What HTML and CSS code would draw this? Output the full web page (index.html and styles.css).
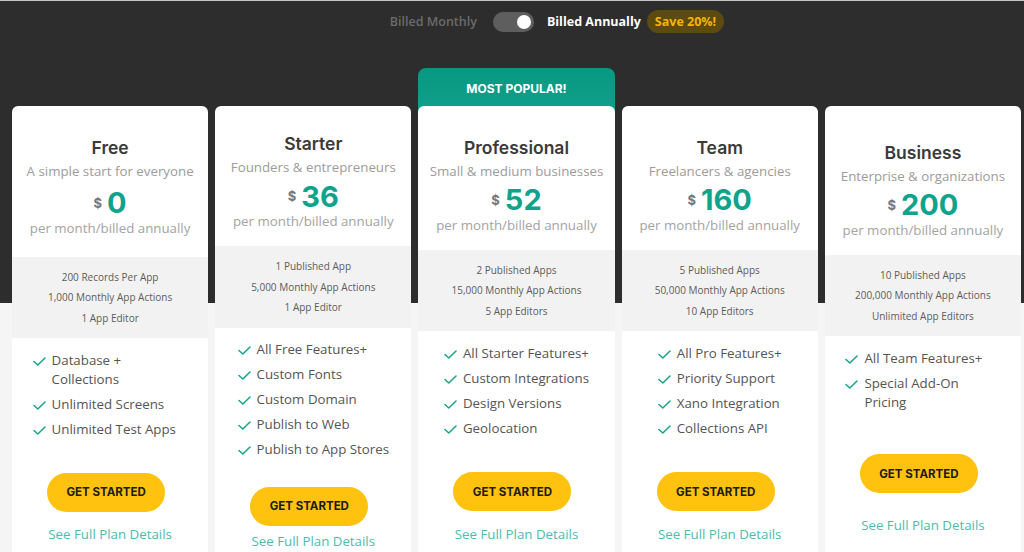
FILE: index.html
```html
<!DOCTYPE html>
<html lang="en">
<head>
  <meta charset="UTF-8">
  <meta name="viewport" content="width=device-width, initial-scale=1.0">
  <title>Pricing</title>
  <link rel="stylesheet" href="styles.css">
</head>
<body>
  <div class="billing">
    <span class="billing-label">Billed Monthly</span>
    <span class="switch"><span class="switch-knob"></span></span>
    <span class="billing-label active">Billed Annually</span>
    <span class="save-badge">Save 20%!</span>
  </div>

  <div class="plans">
    <!-- Free -->
    <div class="plan plan-free">
      <div class="plan-head">
        <h3 class="plan-title">Free</h3>
        <div class="plan-sub">A simple start for everyone</div>
        <div class="plan-price"><span class="currency">$</span><span class="amount">0</span></div>
        <div class="plan-period">per month/billed annually</div>
      </div>
      <div class="limits">
        <div>200 Records Per App</div>
        <div>1,000 Monthly App Actions</div>
        <div>1 App Editor</div>
      </div>
      <div class="features">
        <ul>
          <li><svg viewBox="0 0 13 9"><path d="M1 4.5 4.8 8 12 1"/></svg><span>Database + Collections</span></li>
          <li><svg viewBox="0 0 13 9"><path d="M1 4.5 4.8 8 12 1"/></svg><span>Unlimited Screens</span></li>
          <li><svg viewBox="0 0 13 9"><path d="M1 4.5 4.8 8 12 1"/></svg><span>Unlimited Test Apps</span></li>
        </ul>
      </div>
      <div class="cta">
        <a class="btn" href="#">GET STARTED</a>
        <a class="plan-link" href="#">See Full Plan Details</a>
      </div>
    </div>

    <!-- Starter -->
    <div class="plan">
      <div class="plan-head">
        <h3 class="plan-title">Starter</h3>
        <div class="plan-sub">Founders &amp; entrepreneurs</div>
        <div class="plan-price"><span class="currency">$</span><span class="amount">36</span></div>
        <div class="plan-period">per month/billed annually</div>
      </div>
      <div class="limits">
        <div>1 Published App</div>
        <div>5,000 Monthly App Actions</div>
        <div>1 App Editor</div>
      </div>
      <div class="features">
        <ul>
          <li><svg viewBox="0 0 13 9"><path d="M1 4.5 4.8 8 12 1"/></svg><span>All Free Features+</span></li>
          <li><svg viewBox="0 0 13 9"><path d="M1 4.5 4.8 8 12 1"/></svg><span>Custom Fonts</span></li>
          <li><svg viewBox="0 0 13 9"><path d="M1 4.5 4.8 8 12 1"/></svg><span>Custom Domain</span></li>
          <li><svg viewBox="0 0 13 9"><path d="M1 4.5 4.8 8 12 1"/></svg><span>Publish to Web</span></li>
          <li><svg viewBox="0 0 13 9"><path d="M1 4.5 4.8 8 12 1"/></svg><span>Publish to App Stores</span></li>
        </ul>
      </div>
      <div class="cta">
        <a class="btn" href="#">GET STARTED</a>
        <a class="plan-link" href="#">See Full Plan Details</a>
      </div>
    </div>

    <!-- Professional -->
    <div class="plan">
      <div class="plan-badge">MOST POPULAR!</div>
      <div class="plan-head">
        <h3 class="plan-title">Professional</h3>
        <div class="plan-sub">Small &amp; medium businesses</div>
        <div class="plan-price"><span class="currency">$</span><span class="amount">52</span></div>
        <div class="plan-period">per month/billed annually</div>
      </div>
      <div class="limits">
        <div>2 Published Apps</div>
        <div>15,000 Monthly App Actions</div>
        <div>5 App Editors</div>
      </div>
      <div class="features">
        <ul>
          <li><svg viewBox="0 0 13 9"><path d="M1 4.5 4.8 8 12 1"/></svg><span>All Starter Features+</span></li>
          <li><svg viewBox="0 0 13 9"><path d="M1 4.5 4.8 8 12 1"/></svg><span>Custom Integrations</span></li>
          <li><svg viewBox="0 0 13 9"><path d="M1 4.5 4.8 8 12 1"/></svg><span>Design Versions</span></li>
          <li><svg viewBox="0 0 13 9"><path d="M1 4.5 4.8 8 12 1"/></svg><span>Geolocation</span></li>
        </ul>
      </div>
      <div class="cta">
        <a class="btn" href="#">GET STARTED</a>
        <a class="plan-link" href="#">See Full Plan Details</a>
      </div>
    </div>

    <!-- Team -->
    <div class="plan">
      <div class="plan-head">
        <h3 class="plan-title">Team</h3>
        <div class="plan-sub">Freelancers &amp; agencies</div>
        <div class="plan-price"><span class="currency">$</span><span class="amount">160</span></div>
        <div class="plan-period">per month/billed annually</div>
      </div>
      <div class="limits">
        <div>5 Published Apps</div>
        <div>50,000 Monthly App Actions</div>
        <div>10 App Editors</div>
      </div>
      <div class="features">
        <ul>
          <li><svg viewBox="0 0 13 9"><path d="M1 4.5 4.8 8 12 1"/></svg><span>All Pro Features+</span></li>
          <li><svg viewBox="0 0 13 9"><path d="M1 4.5 4.8 8 12 1"/></svg><span>Priority Support</span></li>
          <li><svg viewBox="0 0 13 9"><path d="M1 4.5 4.8 8 12 1"/></svg><span>Xano Integration</span></li>
          <li><svg viewBox="0 0 13 9"><path d="M1 4.5 4.8 8 12 1"/></svg><span>Collections API</span></li>
        </ul>
      </div>
      <div class="cta">
        <a class="btn" href="#">GET STARTED</a>
        <a class="plan-link" href="#">See Full Plan Details</a>
      </div>
    </div>

    <!-- Business -->
    <div class="plan">
      <div class="plan-head">
        <h3 class="plan-title">Business</h3>
        <div class="plan-sub">Enterprise &amp; organizations</div>
        <div class="plan-price"><span class="currency">$</span><span class="amount">200</span></div>
        <div class="plan-period">per month/billed annually</div>
      </div>
      <div class="limits">
        <div>10 Published Apps</div>
        <div>200,000 Monthly App Actions</div>
        <div>Unlimited App Editors</div>
      </div>
      <div class="features">
        <ul>
          <li><svg viewBox="0 0 13 9"><path d="M1 4.5 4.8 8 12 1"/></svg><span>All Team Features+</span></li>
          <li><svg viewBox="0 0 13 9"><path d="M1 4.5 4.8 8 12 1"/></svg><span>Special Add-On Pricing</span></li>
        </ul>
      </div>
      <div class="cta">
        <a class="btn" href="#">GET STARTED</a>
        <a class="plan-link" href="#">See Full Plan Details</a>
      </div>
    </div>
  </div>
</body>
</html>
```

FILE: styles.css
```css
:root {
  --dark-bg: #2d2d2d;
  --light-bg: #f5f5f5;
  --teal: #0fa38c;
  --teal-link: #4cbcae;
  --yellow: #ffc20e;
  --text: #555;
  --muted: #a3a3a3;
}
body {
  margin: 0;
  border-top: 1px solid #c4c4c4;
  font-family: "Open Sans", "Liberation Sans", sans-serif;
  color: var(--text);
  background: linear-gradient(to bottom, var(--dark-bg) 303px, var(--light-bg) 303px);
  min-height: 551px;
  overflow: hidden;
}

/* billing toggle */
.billing {
  display: flex;
  justify-content: center;
  align-items: center;
  padding: 9px 0 0 90px;
  height: 23px;
}
.billing-label {
  font-size: 12.5px;
  font-weight: 600;
  color: #6b6b6b;
}
.billing-label.active {
  color: #fff;
  font-weight: 700;
}
.switch {
  display: flex;
  justify-content: flex-end;
  align-items: center;
  box-sizing: border-box;
  width: 41px;
  height: 20px;
  padding: 0 3px;
  margin: 0 13px 0 16px;
  border-radius: 10px;
  background: #5e5e5e;
}
.switch-knob {
  width: 14px;
  height: 14px;
  border-radius: 50%;
  background: #fff;
}
.save-badge {
  margin-left: 6px;
  padding: 0 8px;
  height: 23px;
  line-height: 23px;
  border-radius: 12px;
  background: #5c4a10;
  color: #f2b600;
  font-size: 12.5px;
  font-weight: 700;
}

/* cards */
.plans {
  display: grid;
  grid-template-columns: repeat(5, 1fr);
  gap: 7px;
  padding: 0 3px 0 12px;
  margin-top: 73px;
}
.plan {
  position: relative;
  display: flex;
  flex-direction: column;
  height: 470px;
  background: #fff;
  border-radius: 6px 6px 0 0;
  text-align: center;
}
.plan::before {
  content: "";
  flex: 1 1 0;
}
.plan::after {
  content: "";
  flex: 2 1 0;
}
.plan > div {
  flex-shrink: 0;
}
.plan-badge {
  position: absolute;
  left: 0;
  right: 0;
  top: -38px;
  z-index: -1;
  height: 48px;
  box-sizing: border-box;
  padding-top: 13px;
  line-height: 16px;
  border-radius: 8px 8px 0 0;
  background: linear-gradient(to bottom, #079882, #11a08b);
  color: #fff;
  font-family: Inter, sans-serif;
  font-size: 12px;
  font-weight: 700;
}
.plan-head {
  padding: 24px 6px 16px;
}
.plan-title {
  margin: 0;
  font-family: Inter, sans-serif;
  font-size: 17.5px;
  font-weight: 600;
  line-height: 24px;
  color: #3a3a3a;
}
.plan-sub {
  margin-top: 2px;
  font-size: 13.3px;
  line-height: 18px;
  color: #9c9c9c;
}
.plan-price {
  display: flex;
  justify-content: center;
  align-items: center;
  gap: 5px;
  margin-top: 4px;
  height: 32px;
  font-family: Inter, sans-serif;
  font-weight: 700;
}
.currency {
  font-size: 13px;
  color: #777;
}
.amount {
  font-size: 29px;
  color: var(--teal);
}
.plan-period {
  font-size: 13.3px;
  line-height: 18px;
  color: var(--muted);
}
.plan-free .plan-price {
  margin-top: 7px;
}
.plan-free .plan-head {
  padding-bottom: 20px;
}
.limits {
  padding: 10px 0;
  background: #f2f2f2;
  font-size: 10px;
  line-height: 20.5px;
  color: #5c5c5c;
}
.features {
  padding: 12.5px 0 21.5px;
}
.features ul {
  display: inline-block;
  max-width: 79%;
  margin: 0;
  padding: 0;
  list-style: none;
  text-align: left;
}
.features li {
  display: flex;
  gap: 6px;
  font-size: 13.3px;
  line-height: 19px;
  color: var(--text);
}
.features li + li {
  margin-top: 6px;
}
.features svg {
  flex-shrink: 0;
  width: 13px;
  height: 9px;
  margin-top: 6px;
  fill: none;
  stroke: #1ba58d;
  stroke-width: 1.6;
  stroke-linecap: round;
  stroke-linejoin: round;
}
.cta {
  flex: 4 1 auto;
  display: flex;
  flex-direction: column;
  align-items: center;
  padding-bottom: 20px;
}
.btn {
  display: flex;
  justify-content: center;
  align-items: center;
  margin: auto 8px 0 0;
  width: 118px;
  height: 39px;
  border-radius: 20px;
  background: var(--yellow);
  color: #1b1b1b;
  font-family: Inter, sans-serif;
  font-size: 11.5px;
  font-weight: 700;
  text-decoration: none;
}
.plan-link {
  margin-top: auto;
  padding-top: 1px;
  font-size: 13.3px;
  line-height: 20px;
  color: var(--teal-link);
  text-decoration: none;
}
```
